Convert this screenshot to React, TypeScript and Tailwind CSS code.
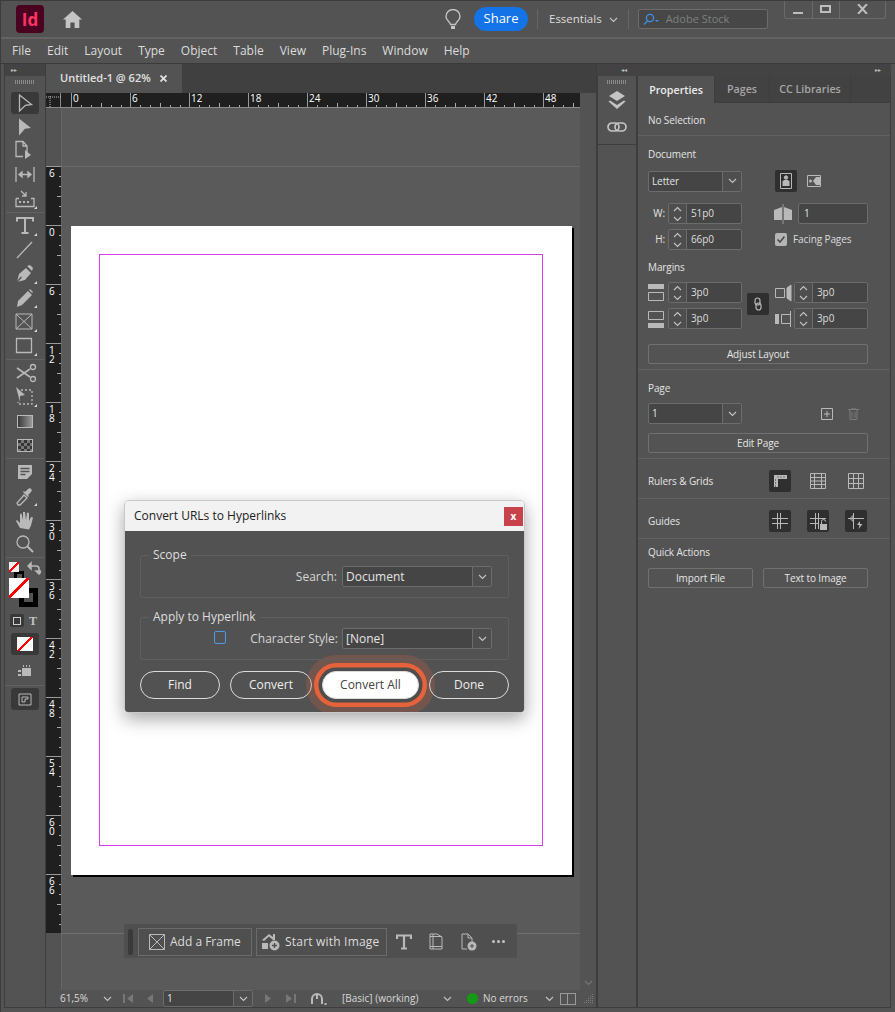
import type { ReactNode } from "react";
import { clsx } from "clsx";

const ink = "#b9b9b9";

function Glyph({ w = 30, h = 24, corner, className, children }: { w?: number; h?: number; corner?: boolean; className?: string; children: ReactNode }) {
  return (
    <svg width={w} height={h} viewBox={`0 0 ${w} ${h}`} fill="none" stroke={ink} strokeWidth="1.3" className={clsx("block shrink-0", className)}>
      {children}
      {corner && <polygon points="27,19 27,22 24,22" fill="#d8d8d8" stroke="none" />}
    </svg>
  );
}

function Tool({ active, corner, children }: { active?: boolean; corner?: boolean; children: ReactNode }) {
  return (
    <div className="flex h-6 items-center justify-center">
      <div className={clsx("flex h-[22px] w-[28px] items-center justify-center rounded-[3px]", active && "bg-[#393939]")}>
        <Glyph corner={corner} className="-mx-px">
          {children}
        </Glyph>
      </div>
    </div>
  );
}

function ToolDivider() {
  return <div className="mx-[1px] my-px h-px bg-[#626262]" />;
}

function Chevron({ className }: { className?: string }) {
  return (
    <svg width="9" height="6" viewBox="0 0 9 6" fill="none" stroke="#c4c4c4" strokeWidth="1.1" className={clsx("block shrink-0", className)}>
      <path d="M1 1l3.5 3.5L8 1" />
    </svg>
  );
}

function Select({ value, className, caret = "w-[19px]" }: { value: string; className?: string; caret?: string }) {
  return (
    <div className={clsx("flex items-stretch rounded-[2px] border border-[#6c6c6c] bg-[#454545]", className)}>
      <div className="flex-1 pl-[3px] text-[#e4e4e4]">{value}</div>
      <div className={clsx("flex items-center justify-center border-l border-[#6c6c6c] bg-[#4e4e4e]", caret)}>
        <Chevron />
      </div>
    </div>
  );
}

function Spin({ value, className }: { value: string; className?: string }) {
  return (
    <div className={clsx("flex h-[21px] items-stretch rounded-[2px] border border-[#6c6c6c] bg-[#454545] text-[10px]", className)}>
      <div className="flex w-[18px] flex-col items-center justify-center gap-[4px] border-r border-[#6c6c6c] bg-[#4e4e4e]">
        <Chevron className="rotate-180" />
        <Chevron />
      </div>
      <div className="flex flex-1 items-center pl-[4px] text-[#dedede]">{value}</div>
    </div>
  );
}

function PanelButton({ label, className }: { label: string; className?: string }) {
  return (
    <div className={clsx("flex h-[20px] items-center justify-center rounded-[2px] border border-[#707070] text-[10px] text-[#e6e6e6]", className)}>
      {label}
    </div>
  );
}

function IconBox({ active, children }: { active?: boolean; children: ReactNode }) {
  return (
    <div className={clsx("flex h-[22px] w-[22px] items-center justify-center rounded-[2px]", active && "bg-[#2f2f2f]")}>
      <svg width="18" height="18" viewBox="0 0 18 18" fill="none" stroke={ink} strokeWidth="1">
        {children}
      </svg>
    </div>
  );
}

function Section({ className, children }: { className?: string; children: ReactNode }) {
  return <div className={clsx("border-b border-[#616161] px-[10px]", className)}>{children}</div>;
}

function HorizontalRuler() {
  const labels = [0, 6, 12, 18, 24, 30, 36, 42];
  return (
    <div className="flex h-[15px] border-b border-[#8a8a8a] bg-[#1f1f1f] text-[10px] leading-[11px] text-white">
      <div className="relative h-full w-[15px] shrink-0 border-r border-[#8a8a8a]">
        <svg width="15" height="14" viewBox="0 0 15 14" fill="none" stroke="#bbb" strokeDasharray="1 1" className="absolute left-0 top-0">
          <path d="M4 3v11M0 4h15" />
        </svg>
      </div>
      <div className="w-[10px] shrink-0" />
      {labels.map((n) => (
        <RulerCell key={n} label={n} />
      ))}
      <RulerCell label={48} narrow />
    </div>
  );
}

function RulerCell({ label, narrow }: { label: number; narrow?: boolean }) {
  return (
    <div className={clsx("relative h-full shrink-0 border-l border-[#9a9a9a] pl-[1px]", narrow ? "w-[37px]" : "w-[59px]")}>
      {label}
      <svg width={narrow ? 36 : 59} height="4" viewBox={narrow ? "0 0 36 4" : "0 0 59 4"} stroke="#aaa" className="absolute bottom-0 left-0">
        <path d={narrow ? "M9.5 2v2M19.5 2v2M29.5 0v4" : "M9.5 2v2M19.5 2v2M29.5 0v4M39.5 2v2M49.5 2v2"} />
      </svg>
    </div>
  );
}

function VerticalRuler() {
  const labels = ["6", "0", "6", "12", "18", "24", "30", "36", "42", "48", "54", "60", "66"];
  return (
    <div className="mt-[58px] flex h-[767px] w-[15px] shrink-0 flex-col bg-[#1f1f1f] text-[10px] leading-[9px] text-white">
      {labels.map((l, i) => (
        <div key={i} className="relative h-[59px] w-full shrink-0 whitespace-pre-line border-t border-[#9a9a9a] pl-[3px] pt-[2px]">
          {l.split("").join("\n")}
          <svg width="4" height="59" viewBox="0 0 4 59" stroke="#aaa" className="absolute right-0 top-0">
            <path d="M2 9.5h2M2 19.5h2M0 29.5h4M2 39.5h2M2 49.5h2" />
          </svg>
        </div>
      ))}
    </div>
  );
}

function TitleBar() {
  return (
    <div className="flex h-[38px] items-center border-b-2 border-[#636363] pl-[15px]">
      <div className="flex h-[28px] w-[28px] items-center justify-center rounded-[4px] bg-[#49021f] text-[17px] font-bold leading-none text-[#ff3366]">
        Id
      </div>
      <svg width="19" height="17" viewBox="0 0 19 17" fill="#c4c4c4" className="ml-[19px]">
        <path d="M9.5 0L0 8.5h2.7V17h4.7v-5.5h4.2V17h4.7V8.5H19z" />
      </svg>
      <svg width="16" height="21" viewBox="0 0 16 21" fill="none" stroke="#c4c4c4" strokeWidth="1.4" className="ml-[363px]">
        <path d="M5.5 15.5C5 12.5 1 11.5 1 7.5a7 7 0 0 1 14 0c0 4-4 5-4.5 8z" />
        <path d="M6 18.5h4" strokeWidth="3" />
      </svg>
      <div className="ml-[13px] flex h-[24px] w-[54px] items-center justify-center rounded-full bg-[#1473e6] text-[13px] text-white">Share</div>
      <div className="ml-[9px] h-[20px] w-px bg-[#666]" />
      <div className="ml-[11px] text-[11.5px] text-[#dcdcdc]">Essentials</div>
      <Chevron className="ml-[7px] mt-[2px]" />
      <div className="ml-[10px] h-[20px] w-px bg-[#666]" />
      <div className="ml-[9px] flex h-[20px] w-[130px] items-center gap-[6px] rounded-[2px] border border-[#6c6c6c] bg-[#474747] pl-[4px] text-[11px] text-[#7f7f7f]">
        <svg width="17" height="13" viewBox="0 0 17 13" fill="none" stroke="#3f8fe8" strokeWidth="1.3">
          <circle cx="7" cy="5" r="3.6" />
          <path d="M4.5 8L1 11.5" />
          <path d="M12 7h4l-2 2z" fill="#3f8fe8" stroke="none" />
        </svg>
        Adobe Stock
      </div>
      <div className="mb-[19px] ml-[16px] flex h-[19px] w-[102px] items-center rounded-b-[3px] border border-t-0 border-[#6a6a6a]">
        <div className="flex h-full w-[28px] items-end justify-center border-r border-[#6a6a6a] pb-[4px]">
          <div className="h-[2px] w-[10px] bg-[#bdbdbd]" />
        </div>
        <div className="flex h-full w-[27px] items-center justify-center border-r border-[#6a6a6a]">
          <div className="h-[8px] w-[11px] border-2 border-[#bdbdbd]" />
        </div>
        <div className="flex h-full flex-1 items-center justify-center">
          <svg width="11" height="10" viewBox="0 0 11 10" stroke="#bdbdbd" strokeWidth="2">
            <path d="M1 0l9 10M10 0L1 10" />
          </svg>
        </div>
      </div>
    </div>
  );
}

function MenuBar() {
  const items = ["File", "Edit", "Layout", "Type", "Object", "Table", "View", "Plug-Ins", "Window", "Help"];
  return (
    <div className="flex h-[25px] items-center gap-[16px] border-b border-[#3a3a3a] pl-[11px] text-[12px] text-[#dcdcdc]">
      {items.map((m) => (
        <span key={m}>{m}</span>
      ))}
    </div>
  );
}

function ToolPanel() {
  return (
    <div className="ml-[3px] flex w-[42px] shrink-0 flex-col border-x border-b border-[#3d3d3d]">
      <div className="flex h-[12px] items-center bg-[#434343] pl-[6px] text-[6px] leading-none text-[#bbb]">▸▸</div>
      <div className="mx-auto mb-[7px] mt-[4px] h-[4px] w-[20px] bg-[repeating-linear-gradient(90deg,#8a8a8a_0,#8a8a8a_1px,transparent_1px,transparent_2px)]" />
      <Tool active>
        <path d="M9.500 4l12 9.500-6 .8-6 5.700z" />
      </Tool>
      <Tool>
        <path d="M9 3.500l12 9.500-6 .8-6 6.700z" fill={ink} stroke="none" />
      </Tool>
      <Tool>
        <path d="M17 13V7l-4-4.500H6v15h7M13 3v4h4" />
        <path d="M15 11l6 5-6 4z" fill={ink} stroke="none" />
      </Tool>
      <Tool>
        <path d="M6 4v15M24 4v15M9 11.5h12M9 11.5l3-2.5v5zM21 11.5l-3-2.5v5z" fill={ink} />
      </Tool>
      <Tool corner>
        <path d="M6 11.5v8h18v-8h-3M9 11.5H6M11 4l5 5M16 5v4h-4" />
        <path d="M9 14h2v2H9zM13 14h2v2h-2zM17 14h2v2h-2z" fill={ink} stroke="none" />
      </Tool>
      <ToolDivider />
      <Tool corner>
        <path d="M7 7.5V4h16v3.500M15 4v15M11.500 19h7" strokeWidth="2" />
      </Tool>
      <Tool>
        <path d="M7 20L22 4" strokeWidth="1.300" />
      </Tool>
      <Tool corner>
        <path d="M7 20l2-8 7-6 5 5-6 7z" fill={ink} stroke="none" />
        <path d="M7 20l4.500-5" stroke="#535353" />
        <path d="M17 4l3-1 3 3-1 3z" fill={ink} stroke="none" />
      </Tool>
      <Tool corner>
        <path d="M7 21l1-6L18 5l4 4L12 19z" fill={ink} stroke="none" />
        <path d="M19 4l1-1 3 3-1 1z" fill={ink} stroke="none" />
      </Tool>
      <Tool corner>
        <path d="M6 4h16v15H6zM6 4l16 15M22 4L6 19" strokeWidth="1" />
      </Tool>
      <Tool corner>
        <path d="M6.500 4.500h15v14h-15z" />
      </Tool>
      <ToolDivider />
      <Tool>
        <path d="M7 7l13 9M7 17l13-9" strokeWidth="1.600" />
        <circle cx="23" cy="6" r="2.500" />
        <circle cx="23" cy="18" r="2.500" />
      </Tool>
      <Tool corner>
        <path d="M6 2l9 8-5 1v6z" fill={ink} stroke="none" />
        <path d="M11 5h11v14H8v-2" strokeDasharray="2 2" />
      </Tool>
      <div className="flex h-6 items-center justify-center">
        <div className="h-[13px] w-[16px] border border-[#b9b9b9] bg-[linear-gradient(90deg,#3a3a3a,#9a9a9a)]" />
      </div>
      <div className="flex h-6 items-center justify-center">
        <div className="h-[13px] w-[16px] border border-[#b9b9b9] bg-[conic-gradient(#777_25%,#353535_0_50%,#777_0_75%,#353535_0)] bg-[length:6px_6px]" />
      </div>
      <ToolDivider />
      <Tool>
        <path d="M8 5h14v9l-5 5H8z" fill={ink} stroke="none" />
        <path d="M10.500 8.500h9M10.500 11.500h9M10.500 14.500h5" stroke="#535353" />
      </Tool>
      <Tool corner>
        <path d="M8 21l-1-2 7-8 3 3-7 7z" />
        <path d="M15 8l3-3 2-1 2 2-1 2-3 3 1 1-1 1-5-5 1-1z" fill={ink} stroke="none" />
      </Tool>
      <Tool>
        <path d="M10 20l-4-7 1-1 3 3V6l1.500-.5L13 12V4h2l1 8 1-7.500 2 .5v8l2-4 2 .5-2 8-2 4z" fill={ink} stroke="none" />
      </Tool>
      <Tool>
        <circle cx="13" cy="10" r="6" strokeWidth="1.300" />
        <path d="M17.500 14.500L23 20" strokeWidth="2" />
      </Tool>
      <ToolDivider />
      <div className="relative h-[50px]">
        <div className="absolute left-[9px] top-[12px] flex h-[10px] w-[10px] items-center justify-center bg-black">
          <div className="h-[5px] w-[5px] bg-[#535353]" />
        </div>
        <div className="absolute left-[4px] top-[3px] h-[10px] w-[10px] bg-[linear-gradient(135deg,#eee_42%,#f00_42%,#f00_58%,#eee_58%)]" />
        <svg width="14" height="14" viewBox="0 0 14 14" fill="none" stroke={ink} strokeWidth="1.500" className="absolute left-[22px] top-[2px]">
          <path d="M2 5h7a3 3 0 0 1 3 3v4M1 5l3-3v6zM12 13l-3-3h6z" />
        </svg>
        <div className="absolute left-[14px] top-[29px] flex h-[19px] w-[19px] items-center justify-center bg-black">
          <div className="h-[9px] w-[9px] bg-[#535353]" />
        </div>
        <div className="absolute left-[4px] top-[19px] h-[20px] w-[20px] bg-[linear-gradient(135deg,#fff_45%,#f00_45%,#f00_55%,#fff_55%)]" />
      </div>
      <div className="flex h-[23px] items-center gap-[5px] pl-[5px]">
        <div className="flex h-[13px] w-[14px] items-center justify-center rounded-[2px] bg-[#393939]">
          <div className="h-[8px] w-[8px] border border-[#ccc]" />
        </div>
        <span className="font-['Liberation_Serif',serif] text-[12px] font-bold leading-none text-[#c4c4c4]">T</span>
      </div>
      <div className="mx-auto mt-[1px] flex h-[22px] w-[28px] items-center justify-center rounded-[3px] bg-[#393939]">
        <div className="h-[14px] w-[16px] bg-[linear-gradient(135deg,#fff_44%,#f00_44%,#f00_56%,#fff_56%)]" />
      </div>
      <div className="mt-[4px] flex h-[24px] items-center justify-center">
        <svg width="14" height="12" viewBox="0 0 14 12" fill={ink}>
          <path d="M4 3h9v8H4zM0 5h3v2H0zM0 9h3v2H0zM5 0h1v2H5zM8 0h1v2H8zM11 0h1v2h-1z" />
        </svg>
      </div>
      <div className="my-[2px] h-px bg-[#626262]" />
      <div className="mx-auto flex h-[22px] w-[28px] items-center justify-center rounded-[3px] bg-[#393939]">
        <svg width="14" height="13" viewBox="0 0 14 13" fill="none" stroke={ink}>
          <path d="M1 1h12v11H1zM4 4h6v2H7v3H4z" />
        </svg>
      </div>
      <div className="flex-1" />
    </div>
  );
}

function FrameBar() {
  return (
    <div className="absolute left-[78px] top-[831px] flex h-[34px] w-[393px] items-center border border-[#505050] bg-[#4f4f4f] pl-[3px] pt-px text-[12px] text-[#dcdcdc]">
      <div className="h-[26px] w-[5px] rounded-[2px] bg-[#3a3a3a]" />
      <div className="ml-[5px] flex h-[28px] w-[114px] items-center gap-[5px] border border-[#6b6b6b] pl-[10px]">
        <svg width="16" height="16" viewBox="0 0 16 16" fill="none" stroke={ink}>
          <path d="M.5.5h15v15H.5zM.5.5l15 15M15.500.5l-15 15" />
        </svg>
        Add a Frame
      </div>
      <div className="ml-[4px] flex h-[28px] w-[131px] items-center gap-[5px] border border-[#6b6b6b] pl-[5px] tracking-[0.2px]">
        <svg width="18" height="18" viewBox="0 0 18 18" fill={ink}>
          <path d="M0 7l7-6 4 3V1h2v6h-2L7 3.500 2 8zM0 10h6v6H0z" />
          <circle cx="12.500" cy="12.500" r="5" />
          <path d="M12.500 10v5M10 12.500h5" stroke="#4f4f4f" strokeWidth="1.300" />
        </svg>
        Start with Image
      </div>
      <svg width="16" height="16" viewBox="0 0 16 16" fill="none" stroke={ink} strokeWidth="2.200" className="ml-[9px]">
        <path d="M1 5V1.500h14V5M8 1.500v13M5 14.500h6" />
      </svg>
      <svg width="14" height="17" viewBox="0 0 14 17" fill="none" stroke={ink} className="ml-[17px]">
        <path d="M1 1h7l5 3v12H1zM1 3.500h12M1 13.500h12M4 1v15" />
      </svg>
      <svg width="16" height="18" viewBox="0 0 16 18" fill="none" stroke={ink} className="ml-[18px]">
        <path d="M1 1h6l4 4v4M7 1v4h4M1 1v15h5" />
        <circle cx="11" cy="13" r="4.500" fill={ink} stroke="none" />
        <path d="M11 11v4M9 13h4" stroke="#4f4f4f" />
      </svg>
      <div className="ml-[15px] flex gap-[2px]">
        <span className="h-[3px] w-[3px] rounded-full bg-[#c4c4c4]" />
        <span className="h-[3px] w-[3px] rounded-full bg-[#c4c4c4]" />
        <span className="h-[3px] w-[3px] rounded-full bg-[#c4c4c4]" />
      </div>
    </div>
  );
}

function DialogButton({ label, className }: { label: string; className?: string }) {
  return (
    <div className={clsx("flex h-[28px] shrink-0 items-center justify-center rounded-full border border-[#dcdcdc] text-[12px] text-[#eee]", className)}>
      {label}
    </div>
  );
}

function Fieldset({ title, className, children }: { title: string; className?: string; children: ReactNode }) {
  return (
    <div className={clsx("relative h-[43px] rounded-[2px] border border-[#5f5f5f]", className)}>
      <span className="absolute -top-[9px] left-[8px] bg-[#525252] px-[4px] text-[12px] leading-[16px] text-[#dedede]">{title}</span>
      {children}
    </div>
  );
}

function Dialog() {
  return (
    <div className="absolute left-[78px] top-[407px] w-[401px] rounded-[4px] border border-[#c9c9c9] shadow-[0_6px_18px_rgba(0,0,0,0.35)]">
      <div className="flex h-[30px] items-center justify-between rounded-t-[3px] bg-[#f2f2f2] pl-[9px] pr-[1px] text-[12px] text-[#222]">
        Convert URLs to Hyperlinks
        <div className="flex h-[19px] w-[19px] items-center justify-center bg-[#c8424b] text-[10px] font-bold leading-none text-white">x</div>
      </div>
      <div className="h-[181px] overflow-hidden rounded-b-[3px] bg-[#525252] px-[15px] pt-[24px] text-[12px]">
        <Fieldset title="Scope">
          <div className="absolute right-[16px] top-[10px] flex items-center gap-[5px] text-[#d6d6d6]">
            Search:
            <Select value="Document" className="h-[21px] w-[150px] leading-[19px]" />
          </div>
        </Fieldset>
        <Fieldset title="Apply to Hyperlink" className="mt-[19px]">
          <div className="absolute left-[73px] top-[13px] h-[13px] w-[12px] rounded-[2px] border border-[#4b9bea]" />
          <div className="absolute right-[16px] top-[10px] flex items-center gap-[4px] text-[#d6d6d6]">
            Character Style:
            <Select value="[None]" className="h-[21px] w-[150px] leading-[19px]" />
          </div>
        </Fieldset>
        <div className="mt-[11px] flex gap-[10px]">
          <DialogButton label="Find" className="w-[80px]" />
          <DialogButton label="Convert" className="w-[82px]" />
          <DialogButton
            label="Convert All"
            className="w-[97px] bg-white !text-[#444] shadow-[0_0_0_3.500px_#4d4d4d,0_0_0_8px_#e5623a,0_0_0_16px_rgba(229,98,58,0.22)]"
          />
          <DialogButton label="Done" className="w-[80px]" />
        </div>
      </div>
    </div>
  );
}

function StatusBar() {
  return (
    <div className="flex h-[17px] items-center pl-[14px] text-[10px] text-[#d8d8d8]">
      <span className="w-[28px]">61,5%</span>
      <Chevron className="ml-[15px]" />
      <svg width="11" height="9" viewBox="0 0 11 9" fill="#777" className="ml-[11px]">
        <path d="M0 0h2v9H0zM10 0v9L4 4.500z" />
      </svg>
      <svg width="6" height="9" viewBox="0 0 6 9" fill="#777" className="ml-[13px]">
        <path d="M6 0v9L0 4.500z" />
      </svg>
      <Select value="1" className="ml-[10px] h-[17px] w-[90px] leading-[15px]" />
      <svg width="6" height="9" viewBox="0 0 6 9" fill="#777" className="ml-[12px]">
        <path d="M0 0v9l6-4.500z" />
      </svg>
      <svg width="11" height="9" viewBox="0 0 11 9" fill="#777" className="ml-[14px]">
        <path d="M9 0h2v9H9zM1 0v9l6-4.500z" />
      </svg>
      <svg width="17" height="14" viewBox="0 0 17 14" fill="none" stroke={ink} strokeWidth="2" className="ml-[14px]">
        <path d="M2 12V7a5 5 0 0 1 10 0v5M7 3v4" />
        <path d="M14.500 11h2v2h-2z" fill={ink} stroke="none" strokeWidth="0" />
      </svg>
      <span className="ml-[15px] w-[100px]">[Basic] (working)</span>
      <Chevron className="ml-[1px]" />
      <span className="ml-[15px] h-[11px] w-[11px] rounded-full bg-[#159a15]" />
      <span className="ml-[5px] w-[62px]">No errors</span>
      <Chevron />
      <div className="ml-[6px] flex h-[12px] w-[16px] border border-[#9a9a9a]">
        <div className="w-1/2 border-r border-[#9a9a9a]" />
      </div>
      <svg width="11" height="11" viewBox="0 0 11 11" fill="#7c7c7c" className="ml-[7px]">
        <path d="M9 1h1v1H9zM7 3h1v1H7zM9 3h1v1H9zM5 5h1v1H5zM7 5h1v1H7zM9 5h1v1H9zM3 7h1v1H3zM5 7h1v1H5zM7 7h1v1H7zM9 7h1v1H9zM1 9h1v1H1zM3 9h1v1H3zM5 9h1v1H5zM7 9h1v1H7zM9 9h1v1H9z" />
      </svg>
    </div>
  );
}

function Document() {
  return (
    <div className="flex w-[551px] shrink-0 flex-col border-b border-r border-[#3d3d3d]">
      <div className="flex h-[29px] bg-[#404040]">
        <div className="flex w-[136px] items-center gap-[9px] bg-[#535353] pl-[14px] text-[11px] font-semibold text-[#e0e0e0]">
          Untitled-1 @ 62%
          <svg width="7" height="7" viewBox="0 0 7 7" stroke="#e0e0e0" strokeWidth="1.800">
            <path d="M.5.5l6 6M6.500.5l-6 6" />
          </svg>
        </div>
      </div>
      <div className="relative flex min-h-0 flex-1 flex-col">
        <div className="w-[534px]">
          <HorizontalRuler />
        </div>
        <div className="flex min-h-0 flex-1">
          <div className="w-[16px] shrink-0 border-r border-[#666]">
            <VerticalRuler />
          </div>
          <div className="relative w-[518px] shrink-0 overflow-hidden bg-[#5a5a5a] pl-[9px] pt-[118px]">
            <div className="absolute inset-x-0 top-[58px] h-px bg-[#696969]" />
            <div className="absolute inset-x-0 top-[825px] h-px bg-[#707070]" />
            <div className="relative h-[649px] w-[501px] bg-white p-[28px] shadow-[2px_2px_0_#000]">
              <div className="h-[592px] w-[444px] border border-[#d43fe8]" />
            </div>
          </div>
          <div className="flex flex-1 items-end justify-center pb-[4px]">
            <Chevron className="opacity-30" />
          </div>
        </div>
        <StatusBar />
        <Dialog />
        <FrameBar />
      </div>
    </div>
  );
}

function Dock() {
  return (
    <div className="flex w-[40px] shrink-0 flex-col border-x border-b border-[#3d3d3d]">
      <div className="mx-auto mb-[5px] mt-[4px] h-[4px] w-[20px] bg-[repeating-linear-gradient(90deg,#8a8a8a_0,#8a8a8a_1px,transparent_1px,transparent_2px)]" />
      <div className="flex h-[22px] items-center justify-center">
        <svg width="18" height="18" viewBox="0 0 18 18" fill="#c4c4c4">
          <path d="M9 0l8 5-8 5-8-5zM2 9.500L9 14l7-4.500 1.500 1L9 18 .5 10.500z" />
        </svg>
      </div>
      <div className="flex h-[34px] items-center justify-center border-b border-[#3d3d3d] pb-[2px]">
        <svg width="20" height="10" viewBox="0 0 20 10" fill="none" stroke="#c4c4c4" strokeWidth="1.700">
          <rect x="1" y="1" width="11" height="8" rx="4" />
          <rect x="8" y="1" width="11" height="8" rx="4" />
        </svg>
      </div>
    </div>
  );
}

function Properties() {
  return (
    <div className="flex w-[254px] shrink-0 flex-col border-x border-b border-[#3d3d3d] text-[10px] tracking-[-0.1px] text-[#e4e4e4]">
      <div className="flex h-[27px] border-b border-[#3d3d3d] bg-[#424242] text-[10.7px] font-semibold tracking-normal text-[#a6a6a6]">
        <div className="-mb-px flex w-[77px] items-center justify-center border-r border-[#3d3d3d] bg-[#535353] pt-px text-[#ececec]">Properties</div>
        <div className="flex w-[55px] items-center justify-center border-r border-[#3d3d3d] pt-px">Pages</div>
        <div className="flex w-[81px] items-center justify-center border-r border-[#3d3d3d] pt-px">CC Libraries</div>
      </div>
      <Section className="flex h-[33px] items-center pt-[2px]">No Selection</Section>
      <Section className="h-[234px] pt-[11px]">
        <div className="leading-[14px]">Document</div>
        <div className="mt-[9px] flex h-[22px] items-center">
          <Select value="Letter" className="h-[21px] w-[94px] leading-[19px]" />
          <div className="ml-[33px]">
            <IconBox active>
              <path d="M3.500 1.500h11v15h-11z" />
              <circle cx="9" cy="5.500" r="1.700" fill={ink} />
              <path d="M5.500 14V9.500l1.500-1.500h4l1.500 1.500V14z" fill={ink} stroke="none" />
            </IconBox>
          </div>
          <div className="ml-[6px]">
            <IconBox>
              <path d="M2.500 3.500h13v11h-13z" />
              <path d="M8 9l3-4h4v8h-4z" fill={ink} stroke="none" />
              <circle cx="5.500" cy="9" r="1.500" fill={ink} stroke="none" />
            </IconBox>
          </div>
        </div>
        <div className="mt-[11px] flex h-[21px] items-center">
          <span className="w-[20px] pr-[3px] text-right">W:</span>
          <Spin value="51p0" className="w-[74px]" />
          <svg width="18" height="20" viewBox="0 0 18 20" fill={ink} className="ml-[32px]">
            <path d="M0 6l8-3v13H0zM10 3l8 3v10h-8z" />
            <path d="M9 0v20" stroke={ink} strokeWidth=".7" />
          </svg>
          <div className="ml-[6px] flex h-[21px] w-[70px] items-center rounded-[2px] border border-[#6c6c6c] bg-[#454545] pl-[5px]">1</div>
        </div>
        <div className="mt-[5px] flex h-[21px] items-center">
          <span className="w-[20px] pr-[3px] text-right">H:</span>
          <Spin value="66p0" className="w-[74px]" />
          <div className="ml-[33px] flex h-[13px] w-[12px] items-center justify-center rounded-[2px] bg-[#b5b5b5]">
            <svg width="8" height="7" viewBox="0 0 8 7" fill="none" stroke="#444" strokeWidth="1.500">
              <path d="M.5 3.500l2.500 2.500L7.500.5" />
            </svg>
          </div>
          <span className="ml-[6px] text-[#dcdcdc]">Facing Pages</span>
        </div>
        <div className="mt-[10px] leading-[14px]">Margins</div>
        <div className="relative mt-[8px] flex h-[21px] items-center">
          <svg width="17" height="18" viewBox="0 0 17 18" fill="none" stroke={ink} className="mr-[3px]">
            <path d="M0 0h16v5H0z" fill={ink} stroke="none" />
            <path d="M.5 8.500h15v8H.5z" />
          </svg>
          <Spin value="3p0" className="w-[74px]" />
          <svg width="17" height="18" viewBox="0 0 17 18" fill="none" stroke={ink} className="ml-[33px] mr-[2px]">
            <path d="M.5 4.500h9v9h-9zM12 4l4-3v16l-4-3z" />
            <path d="M12 4l4-3v16l-4-3z" fill={ink} stroke="none" />
          </svg>
          <Spin value="3p0" className="w-[74px]" />
          <div className="absolute left-[99px] top-[11px] flex h-[22px] w-[22px] items-center justify-center rounded-[2px] bg-[#2f2f2f]">
            <svg width="8" height="14" viewBox="0 0 8 14" fill="none" stroke={ink} strokeWidth="1.200">
              <rect x="1" y="1" width="5" height="7" rx="2.500" />
              <rect x="2" y="6" width="5" height="7" rx="2.500" />
            </svg>
          </div>
        </div>
        <div className="mt-[5px] flex h-[21px] items-center">
          <svg width="17" height="18" viewBox="0 0 17 18" fill="none" stroke={ink} className="mr-[3px]">
            <path d="M.5 1.500h15v8H.5z" />
            <path d="M0 13h16v5H0z" fill={ink} stroke="none" />
          </svg>
          <Spin value="3p0" className="w-[74px]" />
          <svg width="17" height="18" viewBox="0 0 17 18" fill="none" stroke={ink} className="ml-[33px] mr-[2px]">
            <path d="M0 4h4v10H0z" fill={ink} stroke="none" />
            <path d="M6.500 4.500h9v9h-9M6.500 4.500v9M15.500 1v16" />
          </svg>
          <Spin value="3p0" className="w-[74px]" />
        </div>
        <PanelButton label="Adjust Layout" className="mt-[15px] w-[220px]" />
      </Section>
      <Section className="h-[89px] pt-[11px]">
        <div className="leading-[14px]">Page</div>
        <div className="mt-[8px] flex h-[21px] items-center">
          <Select value="1" className="h-[21px] w-[94px] leading-[19px]" />
          <svg width="12" height="12" viewBox="0 0 12 12" fill="none" stroke={ink} className="ml-[79px]">
            <path d="M.5.500h11v11H.5zM6 3v6M3 6h6" />
          </svg>
          <svg width="11" height="12" viewBox="0 0 11 12" fill="none" stroke="#7a7a7a" className="ml-[15px]">
            <path d="M0 1.500h11M2 2v9.500h7V2M4 4v6M7 4v6M4 1V0h3v1" />
          </svg>
        </div>
        <PanelButton label="Edit Page" className="mt-[9px] w-[220px]" />
      </Section>
      <Section className="flex h-[40px] items-center pt-[5px]">
        <span className="w-[121px]">Rulers &amp; Grids</span>
        <IconBox active>
          <path d="M3 15V3h13v4H7v8z" fill={ink} stroke="none" />
          <path d="M7 4.500v1M10 4.500v1M13 4.500v1M4 8h1M4 11h1M4 14h1" stroke="#2f2f2f" />
        </IconBox>
        <div className="ml-[16px]">
          <IconBox>
            <path d="M1.500 1.500h15v15h-15zM1.500 5.500h15M1.500 9h15M1.500 12.500h15M5.500 1.500v15M12.500 1.500v15" />
          </IconBox>
        </div>
        <div className="ml-[16px]">
          <IconBox>
            <path d="M1.500 1.500h15v15h-15zM1.500 6.500h15M1.500 11.500h15M6.500 1.500v15M11.500 1.500v15" />
          </IconBox>
        </div>
      </Section>
      <Section className="flex h-[40px] items-center pt-[5px]">
        <span className="w-[121px]">Guides</span>
        <IconBox active>
          <path d="M1 6.500h16M1 11.500h16M6.500 1v16M9.500 1v16" />
        </IconBox>
        <div className="ml-[16px]">
          <IconBox active>
            <path d="M1 6.500h16M1 11.500h8M6.500 1v16M9.500 1v16" />
            <path d="M11 12h7v6h-7z" fill={ink} stroke="none" />
            <path d="M12.500 12V9.500a2 2 0 0 1 4 0" />
          </IconBox>
        </div>
        <div className="ml-[16px]">
          <IconBox active>
            <path d="M1 6.500h16M6.500 1v16M3 6.500l3-3v6z" />
            <path d="M13 9l-3 4h2.500l-1 4 4-5h-2.500z" fill={ink} stroke="none" />
          </IconBox>
        </div>
      </Section>
      <div className="px-[10px] pt-[6px]">
        <div className="leading-[14px]">Quick Actions</div>
        <div className="mt-[9px] flex gap-[10px]">
          <PanelButton label="Import File" className="w-[105px]" />
          <PanelButton label="Text to Image" className="w-[105px]" />
        </div>
      </div>
    </div>
  );
}

export default function App() {
  return (
    <div className="flex h-[1012px] w-[895px] flex-col overflow-hidden border-l border-t border-[#3c3c3c] bg-[#535353] font-['Open_Sans','Noto_Sans',sans-serif]">
      <TitleBar />
      <MenuBar />
      <div className="flex min-h-0 flex-1 pb-[4px]">
        <ToolPanel />
        <Document />
        <div className="flex min-w-0 flex-1 flex-col">
          <div className="flex h-[12px] w-[294px] items-center justify-between bg-[#434343] pl-[8px] pr-[10px] text-[6px] leading-none text-[#bbb]">
            <span className="ml-[16px]">◂◂</span>
            <span>▸▸</span>
          </div>
          <div className="flex min-h-0 flex-1">
            <Dock />
            <Properties />
          </div>
        </div>
      </div>
    </div>
  );
}
